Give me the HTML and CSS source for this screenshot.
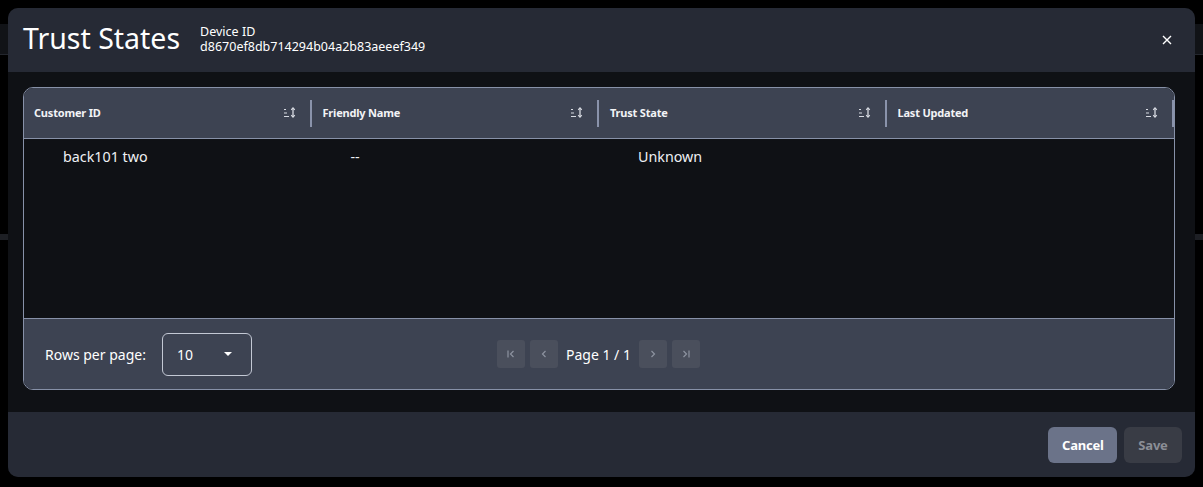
FILE: index.html
```html
<!DOCTYPE html>
<html lang="en">
<head>
    <meta charset="UTF-8">
    <meta name="viewport" content="width=device-width, initial-scale=1.0">
    <title>Trust States</title>
    <link rel="stylesheet" href="styles.css">
</head>
<body>
    <!-- Page behind the overlay -->
    <div class="backdrop">
        <div class="backdrop-bar"></div>
        <div class="backdrop-band"></div>
    </div>

    <!-- Modal -->
    <div class="modal">
        <div class="modal-header">
            <h1 class="modal-title">Trust States</h1>
            <div class="device">
                <div class="device-label">Device ID</div>
                <div class="device-id">d8670ef8db714294b04a2b83aeeef349</div>
            </div>
            <button class="close-btn" aria-label="Close">
                <svg width="10" height="10" viewBox="0 0 10 10"><path d="M1 1L9 9M9 1L1 9" stroke="#fff" stroke-width="1.4"/></svg>
            </button>
        </div>

        <div class="modal-body">
            <div class="table-card">
                <div class="table-head">
                    <div class="th"><span>Customer ID</span><span class="sort"></span></div>
                    <div class="th"><span>Friendly Name</span><span class="sort"></span></div>
                    <div class="th"><span>Trust State</span><span class="sort"></span></div>
                    <div class="th"><span>Last Updated</span><span class="sort"></span></div>
                </div>
                <div class="table-body">
                    <div class="tr">
                        <div class="td">back101 two</div>
                        <div class="td">--</div>
                        <div class="td">Unknown</div>
                        <div class="td"></div>
                    </div>
                </div>
                <div class="table-foot">
                    <div class="rows-per-page">
                        <span>Rows per page:</span>
                        <div class="select">
                            <span>10</span>
                            <svg width="10" height="6" viewBox="0 0 10 6"><path d="M1 1H9L5 5Z" fill="#fff"/></svg>
                        </div>
                    </div>
                    <div class="pager">
                        <button class="page-btn"><svg width="10" height="10" viewBox="0 0 10 10"><path d="M2 1.5V8.5M7.5 2L4.5 5L7.5 8" stroke="#8d93a0" stroke-width="1.2" fill="none"/></svg></button>
                        <button class="page-btn"><svg width="10" height="10" viewBox="0 0 10 10"><path d="M6.5 2L3.5 5L6.5 8" stroke="#8d93a0" stroke-width="1.2" fill="none"/></svg></button>
                        <span class="page-label">Page 1 / 1</span>
                        <button class="page-btn"><svg width="10" height="10" viewBox="0 0 10 10"><path d="M3.5 2L6.5 5L3.5 8" stroke="#8d93a0" stroke-width="1.2" fill="none"/></svg></button>
                        <button class="page-btn"><svg width="10" height="10" viewBox="0 0 10 10"><path d="M2.5 2L5.5 5L2.5 8M8 1.5V8.5" stroke="#8d93a0" stroke-width="1.2" fill="none"/></svg></button>
                    </div>
                </div>
            </div>
        </div>

        <div class="modal-footer">
            <button class="btn btn-cancel">Cancel</button>
            <button class="btn btn-save" disabled>Save</button>
        </div>
    </div>

    <script>
        // sort icons: short bars + up/down arrow
        const sortSvg = '<svg width="13" height="11" viewBox="0 0 13 11">' +
            '<path d="M1 2.5H3M1 6H4M1 9.5H6" stroke="#d8dbe2" stroke-width="1.2"/>' +
            '<path d="M10 1V10" stroke="#d8dbe2" stroke-width="1.3"/>' +
            '<path d="M8.2 2.8L10 0.8L11.8 2.8M8.2 8.2L10 10.2L11.8 8.2" stroke="#d8dbe2" stroke-width="1.1" fill="none"/>' +
            '</svg>';
        document.querySelectorAll('.sort').forEach(el => el.innerHTML = sortSvg);
    </script>
</body>
</html>
```

FILE: styles.css
```css
body {
    margin: 0;
    font-family: "Noto Sans", "Open Sans", sans-serif;
    background-color: #000;
    color: #fff;
    width: 1203px;
    height: 487px;
    overflow: hidden;
    position: relative;
}
.backdrop {
    position: absolute;
    top: 0;
    left: 0;
    width: 100%;
    height: 100%;
}
.backdrop-bar {
    position: absolute;
    top: 24px;
    left: 0;
    width: 100%;
    height: 30px;
    background-color: #111317;
    border-bottom: 1px solid #23262d;
}
.backdrop-band {
    position: absolute;
    top: 234px;
    left: 0;
    width: 100%;
    height: 6px;
    background-color: #1d1f24;
}
.modal {
    position: absolute;
    top: 8px;
    left: 8px;
    width: 1187px;
    height: 469px;
    border-radius: 10px;
    overflow: hidden;
    background-color: #0f1115;
    display: flex;
    flex-direction: column;
}
.modal-header {
    height: 64px;
    background-color: #262a35;
    display: flex;
    align-items: center;
    padding: 0 15px;
    box-sizing: border-box;
}
.modal-title {
    margin: 0;
    font-size: 28.5px;
    font-weight: 400;
    line-height: 1;
    padding-bottom: 3px;
}
.device {
    margin-left: 20px;
    font-size: 12.5px;
    line-height: 15px;
    padding-bottom: 2px;
}
.close-btn {
    margin-left: auto;
    background: none;
    border: none;
    padding: 6px;
    margin-right: 2px;
    display: flex;
    cursor: pointer;
}
.modal-body {
    flex: 1;
    padding: 15px;
}
.table-card {
    width: 1152px;
    border: 1px solid #8791a8;
    border-radius: 10px;
    overflow: hidden;
    height: 303px;
    box-sizing: border-box;
    display: flex;
    flex-direction: column;
}
.table-head {
    display: grid;
    grid-template-columns: repeat(4, 1fr);
    height: 51px;
    background-color: #3d4352;
    border-bottom: 1px solid #8791a8;
    box-sizing: border-box;
    align-items: center;
}
.th {
    display: flex;
    align-items: center;
    justify-content: space-between;
    height: 26px;
    padding: 0 14px 1px 10px;
    border-right: 2px solid #8a93ab;
    font-size: 11px;
    font-weight: 700;
    letter-spacing: -0.2px;
    color: #f2f3f6;
}
.th + .th {
    padding-left: 11px;
}
.sort {
    display: flex;
}
.table-body {
    flex: 1;
    background-color: #0f1115;
}
.tr {
    display: grid;
    grid-template-columns: repeat(4, 1fr);
    padding-top: 8px;
}
.td {
    padding-left: 39px;
    font-size: 14.3px;
    line-height: 20px;
    color: #eef0f4;
}
.table-foot {
    height: 70px;
    background-color: #3d4352;
    border-top: 1px solid #8791a8;
    display: flex;
    align-items: center;
    padding: 0 21px;
    position: relative;
}
.rows-per-page {
    display: flex;
    align-items: center;
    gap: 16px;
    font-size: 14px;
}
.select {
    width: 90px;
    height: 43px;
    box-sizing: border-box;
    border: 1px solid #c3c8d4;
    border-radius: 6px;
    display: flex;
    align-items: center;
    justify-content: space-between;
    padding: 0 18px 0 14px;
    font-size: 14px;
}
.pager {
    position: absolute;
    left: 473px;
    top: 21px;
    display: flex;
    align-items: center;
    gap: 5px;
}
.page-btn {
    width: 28px;
    height: 28px;
    border: none;
    border-radius: 3px;
    background-color: #4a4f5c;
    display: flex;
    align-items: center;
    justify-content: center;
    padding: 0;
}
.page-label {
    font-size: 14px;
    margin: 0 3px;
}
.modal-footer {
    height: 65px;
    background-color: #262a35;
    display: flex;
    justify-content: flex-end;
    align-items: center;
    gap: 7px;
    padding: 0 13px;
}
.btn {
    height: 36px;
    border: none;
    border-radius: 6px;
    font-family: "Noto Sans", "Open Sans", sans-serif;
    font-size: 13px;
    font-weight: 700;
    letter-spacing: -0.2px;
    padding: 0 14px;
    cursor: pointer;
}
.btn-cancel {
    background-color: #6b7389;
    color: #fff;
    width: 69px;
}
.btn-save {
    background-color: #393c45;
    color: #8b8e96;
    width: 58px;
}
```
